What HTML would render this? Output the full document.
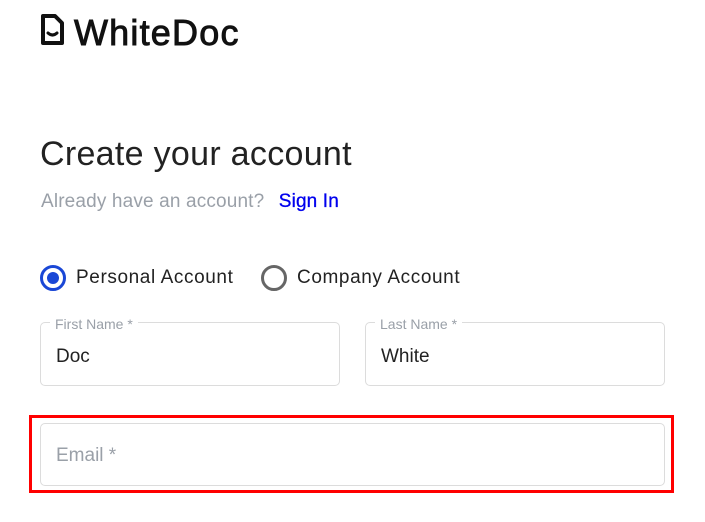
<!DOCTYPE html>
<html><head><meta charset="utf-8"><style>
*{margin:0;padding:0;box-sizing:border-box}
body{width:705px;height:522px;background:#fff;font-family:"Liberation Sans",sans-serif;position:relative;overflow:hidden}
.abs{position:absolute;white-space:nowrap}
.logo{left:74px;top:12px;font-size:36px;font-weight:normal;color:#111;letter-spacing:1.2px;-webkit-text-stroke:0.9px #111}
h1{position:absolute;left:40px;top:135px;font-size:34px;font-weight:normal;color:#222;letter-spacing:0.3px}
.sub{left:41px;top:191px;font-size:19px;color:#9aa0a8;letter-spacing:0.15px}
.sub b{color:#0000ee;font-weight:normal;margin-left:9px;-webkit-text-stroke:0.3px #0000ee}
.radio{top:265px;width:26px;height:26px;border-radius:50%}
.rl{top:267px;font-size:19px;color:#222;letter-spacing:0.6px}
.field{border:1px solid #dcdcdc;border-radius:5px}
.lab{font-size:14px;color:#9aa0a8;background:#fff;padding:0 5px}
.val{font-size:19px;color:#222}
</style></head><body>
<svg class="abs" style="left:40px;top:14px" width="25" height="32" viewBox="0 0 25 32">
<path d="M3 2h12l7 7v20H3z" fill="none" stroke="#111" stroke-width="4" stroke-linejoin="round"/>
<path d="M8 19q4.5 4 9 0" fill="none" stroke="#111" stroke-width="3" stroke-linecap="round"/>
</svg>
<div class="abs logo">WhiteDoc</div>
<h1>Create your account</h1>
<div class="abs sub">Already have an account? <b>Sign In</b></div>
<div class="abs radio" style="left:40px;border:3px solid #1a47d6"><div style="position:absolute;left:4px;top:4px;width:12px;height:12px;border-radius:50%;background:#1a47d6"></div></div>
<div class="abs rl" style="left:76px">Personal Account</div>
<div class="abs radio" style="left:261px;border:3px solid #666"></div>
<div class="abs rl" style="left:297px">Company Account</div>
<div class="abs field" style="left:40px;top:322px;width:300px;height:64px"></div>
<div class="abs lab" style="left:50px;top:316px">First Name *</div>
<div class="abs val" style="left:56px;top:346px">Doc</div>
<div class="abs field" style="left:365px;top:322px;width:300px;height:64px"></div>
<div class="abs lab" style="left:375px;top:316px">Last Name *</div>
<div class="abs val" style="left:381px;top:346px">White</div>
<div class="abs" style="left:29px;top:415px;width:645px;height:78px;border:3px solid #f00"></div>
<div class="abs field" style="left:40px;top:423px;width:625px;height:63px"></div>
<div class="abs val" style="left:56px;top:445px;color:#9aa0a8">Email *</div>
</body></html>
